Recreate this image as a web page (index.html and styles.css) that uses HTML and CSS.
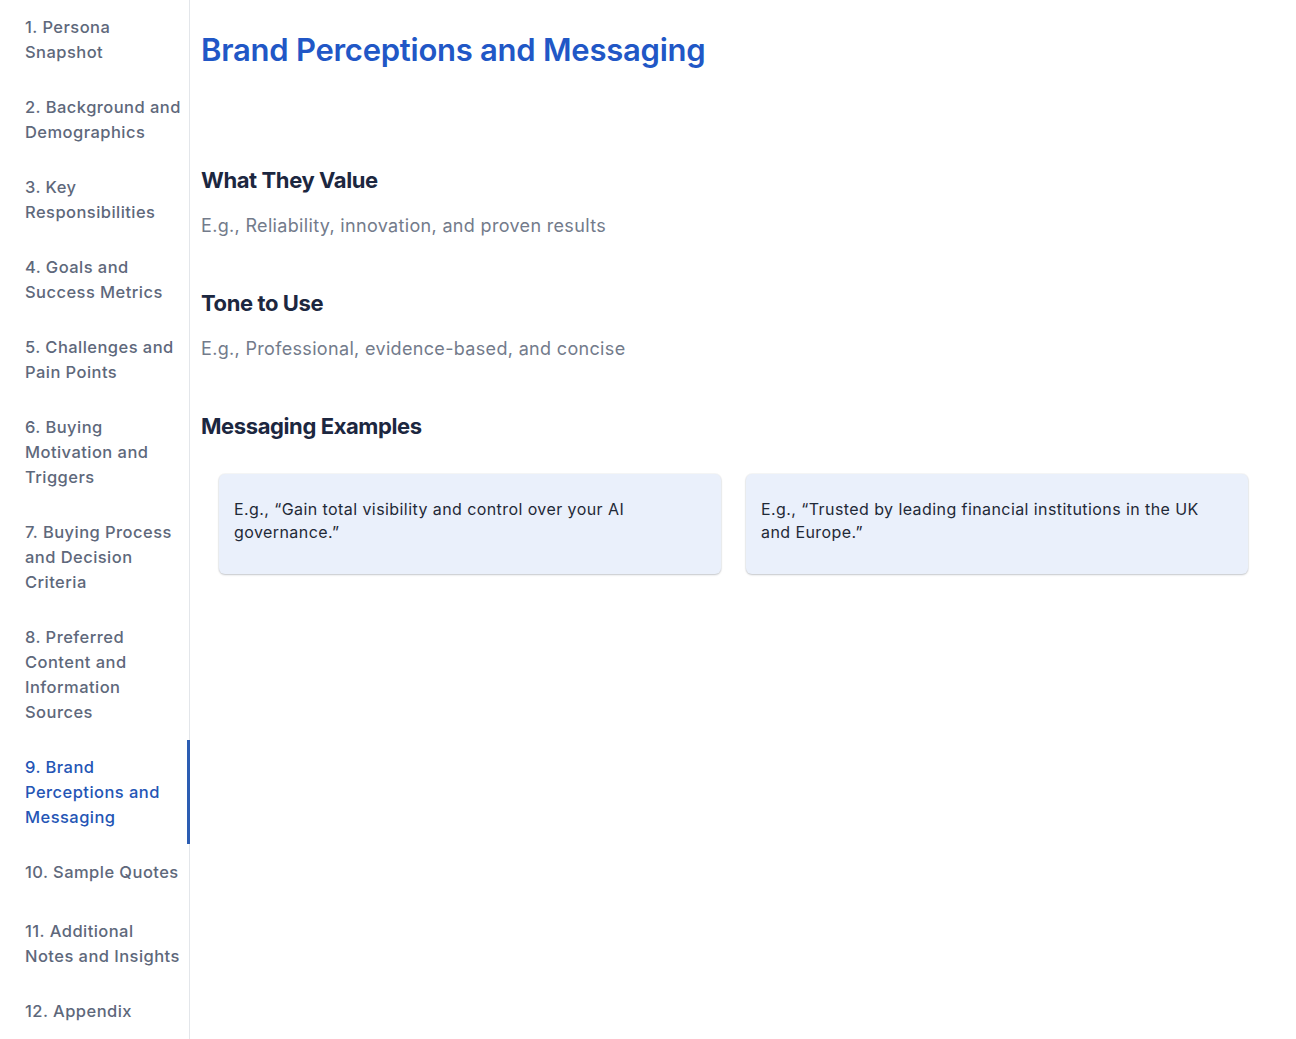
FILE: index.html
```html
<!DOCTYPE html>
<html lang="en">
<head>
<meta charset="utf-8">
<title>Brand Perceptions and Messaging</title>
<link rel="stylesheet" href="styles.css">
</head>
<body>
<div class="layout">
  <nav class="toc">
    <ul class="toc-list">
      <li class="toc-item">1. Persona Snapshot</li>
      <li class="toc-item">2. Background and Demographics</li>
      <li class="toc-item">3. Key Responsibilities</li>
      <li class="toc-item">4. Goals and Success Metrics</li>
      <li class="toc-item">5. Challenges and Pain Points</li>
      <li class="toc-item">6. Buying Motivation and Triggers</li>
      <li class="toc-item">7. Buying Process and Decision Criteria</li>
      <li class="toc-item">8. Preferred Content and Information Sources</li>
      <li class="toc-item active">9. Brand Perceptions and Messaging</li>
      <li class="toc-item">10. Sample Quotes</li>
      <li class="toc-item">11. Additional Notes and Insights</li>
      <li class="toc-item">12. Appendix</li>
    </ul>
  </nav>
  <main class="content">
    <h1 class="page-title">Brand Perceptions and Messaging</h1>
    <section class="block">
      <h3 class="block-title">What They Value</h3>
      <p class="block-text">E.g., Reliability, innovation, and proven results</p>
    </section>
    <section class="block">
      <h3 class="block-title">Tone to Use</h3>
      <p class="block-text">E.g., Professional, evidence-based, and concise</p>
    </section>
    <section class="block">
      <h3 class="block-title">Messaging Examples</h3>
      <div class="cards">
        <div class="card">E.g., “Gain total visibility and control over your AI governance.”</div>
        <div class="card">E.g., “Trusted by leading financial institutions in the UK and Europe.”</div>
      </div>
    </section>
  </main>
</div>
</body>
</html>
```

FILE: styles.css
```css
* { box-sizing: border-box; }

html, body {
  margin: 0;
  padding: 0;
  background: #ffffff;
}

body {
  font-family: Inter, "Noto Sans", "Liberation Sans", sans-serif;
  color: #1e293b;
}

.layout {
  display: flex;
  min-height: 1039px;
}

.toc {
  width: 190px;
  flex: 0 0 190px;
  border-right: 1px solid #e3e6ea;
  padding: 1px 6px 0 25px;
}

.toc-list {
  list-style: none;
  margin: 0;
  padding: 0;
  display: flex;
  flex-direction: column;
  gap: 2px;
}

.toc-item {
  position: relative;
  padding: 14px 0;
  min-height: 57px;
  font-size: 16.5px;
  line-height: 25px;
  letter-spacing: 0.45px;
  font-weight: 500;
  color: #5e687b;
}

.toc-item.active {
  color: #2455b5;
}

.toc-item.active::after {
  content: "";
  position: absolute;
  top: -1px;
  bottom: 0;
  right: -7px;
  width: 3px;
  background: #2c5db2;
}

.content {
  flex: 1;
  padding: 30px 30px 0 11px;
}

.page-title {
  margin: 0 0 95px;
  font-size: 31px;
  line-height: 40px;
  font-weight: 600;
  letter-spacing: -0.25px;
  color: #2157c6;
}

.block {
  margin-top: 48px;
}

.block-title {
  margin: 0 0 17px;
  font-size: 22px;
  line-height: 30px;
  font-weight: 700;
  letter-spacing: -0.4px;
  color: #1c2740;
}

.block-text {
  margin: 0;
  font-size: 18px;
  line-height: 28px;
  letter-spacing: 0.33px;
  color: #737b8b;
}

.cards {
  display: grid;
  grid-template-columns: 1fr 1fr;
  gap: 25px;
  padding: 16px 18px 0;
}

.card {
  background: #eaf0fb;
  border-radius: 6px;
  padding: 24px 15px 30px;
  font-size: 16px;
  line-height: 23px;
  letter-spacing: 0.42px;
  color: #1f2937;
  box-shadow: 0 1px 2px rgba(15, 23, 42, 0.22), 0 0 0 1px rgba(15, 23, 42, 0.03);
}
```
